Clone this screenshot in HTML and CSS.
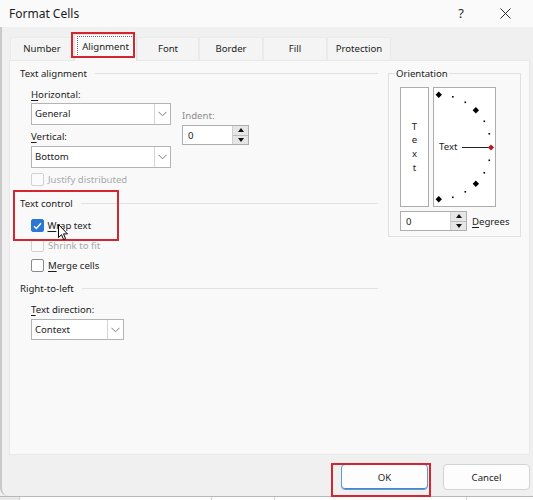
FILE: index.html
```html
<!DOCTYPE html>
<html>
<head>
<meta charset="utf-8">
<link rel="stylesheet" href="styles.css">
</head>
<body>
<div class="window">
  <header class="titlebar">
    <span class="title">Format Cells</span>
    <span class="help">?</span>
    <svg class="close" width="11" height="11" viewBox="0 0 11 11"><path d="M0.5 0.5L10.5 10.5M10.5 0.5L0.5 10.5" stroke="#2b2b2b" stroke-width="1"/></svg>
  </header>
  <div class="frame">
    <nav class="tabs">
      <div class="tab">Number</div>
      <div class="tab selected"><span class="focus">Alignment</span></div>
      <div class="tab">Font</div>
      <div class="tab">Border</div>
      <div class="tab">Fill</div>
      <div class="tab">Protection</div>
    </nav>
    <main class="panel">
      <section class="left">
        <div class="group-head"><span>Text alignment</span><i></i></div>
        <div class="align-grid">
          <div class="col">
            <div class="lbl first"><u>H</u>orizontal:</div>
            <div class="select wide"><span class="sel-val">General</span><b class="dd"><svg width="9" height="6" viewBox="0 0 9 6"><path d="M0.5 0.8L4.5 4.8L8.5 0.8" fill="none" stroke="#7a7a7a" stroke-width="1"/></svg></b></div>
            <div class="lbl vert"><u>V</u>ertical:</div>
            <div class="select wide second"><span class="sel-val">Bottom</span><b class="dd"><svg width="9" height="6" viewBox="0 0 9 6"><path d="M0.5 0.8L4.5 4.8L8.5 0.8" fill="none" stroke="#7a7a7a" stroke-width="1"/></svg></b></div>
          </div>
          <div class="col indent">
            <div class="lbl dim">Indent:</div>
            <div class="spin"><span class="spin-val">0</span><span class="arrows"><b class="up"></b><b class="down"></b></span></div>
          </div>
        </div>
        <div class="check-row disabled justify"><span class="box"></span><span>Justify distributed</span></div>

        <div class="group-head tc"><span>Text control</span><i></i></div>
        <div class="check-row wrap"><span class="box checked"><svg width="9" height="8" viewBox="0 0 9 8"><path d="M1 4.2L3.4 6.5L8 1.2" fill="none" stroke="#fff" stroke-width="1.3"/></svg></span><span><u>W</u>rap text</span></div>
        <div class="check-row disabled next"><span class="box"></span><span>Shrink to fit</span></div>
        <div class="check-row next"><span class="box"></span><span><u>M</u>erge cells</span></div>

        <div class="group-head rtl"><span>Right-to-left</span><i></i></div>
        <div class="lbl dir"><u>T</u>ext direction:</div>
        <div class="select narrow"><span class="sel-val">Context</span><b class="dd"><svg width="9" height="6" viewBox="0 0 9 6"><path d="M0.5 0.8L4.5 4.8L8.5 0.8" fill="none" stroke="#7a7a7a" stroke-width="1"/></svg></b></div>
      </section>

      <fieldset class="orientation">
        <legend>Orientation</legend>
        <div class="orient-row">
          <div class="vtext"><span>T</span><span>e</span><span>x</span><span>t</span></div>
          <div class="dial">
            <svg class="dial-svg" width="63" height="120" viewBox="0 0 63 120">
              <g fill="#000">
                <rect x="3.5" y="5.5" width="4.5" height="4.5" transform="rotate(45 5.75 7.75)"/>
                <rect x="40.6" y="21" width="4.5" height="4.5" transform="rotate(45 42.85 23.25)"/>
                <rect x="40.6" y="94.5" width="4.5" height="4.5" transform="rotate(45 42.85 96.75)"/>
                <rect x="3.5" y="110" width="4.5" height="4.5" transform="rotate(45 5.75 112.25)"/>
                <rect x="19" y="9" width="1.6" height="1.6"/>
                <rect x="31.5" y="14.5" width="1.6" height="1.6"/>
                <rect x="50.5" y="33.5" width="1.6" height="1.6"/>
                <rect x="55.5" y="46" width="1.6" height="1.6"/>
                <rect x="55.5" y="72.5" width="1.6" height="1.6"/>
                <rect x="50.5" y="85" width="1.6" height="1.6"/>
                <rect x="31.5" y="104" width="1.6" height="1.6"/>
                <rect x="19" y="109.5" width="1.6" height="1.6"/>
              </g>
              <path d="M29 60.5H57" stroke="#222" stroke-width="1"/>
              <rect x="55.8" y="58.3" width="4.4" height="4.4" fill="#b02020" transform="rotate(45 58 60.5)"/>
            </svg>
            <span class="dial-text">Text</span>
          </div>
        </div>
        <div class="deg-row">
          <div class="spin"><span class="spin-val">0</span><span class="arrows"><b class="up"></b><b class="down"></b></span></div>
          <span class="deg-lbl"><u>D</u>egrees</span>
        </div>
      </fieldset>
    </main>
    <footer class="buttons">
      <button class="btn ok">OK</button>
      <button class="btn">Cancel</button>
    </footer>
  </div>
  <div class="sheet-strip"><span class="cell first-cell"></span><span class="cell"></span><span class="cell"></span><span class="cell"></span></div>

  <div class="mark mark-tab"></div>
  <div class="mark mark-text"></div>
  <div class="mark mark-ok"></div>
  <svg class="cursor" width="11" height="17" viewBox="0 0 11 17"><path d="M0.5 0.5V13.5L3.5 10.7L5.6 15.6L7.6 14.7L5.5 9.9H9.5Z" fill="#fff" stroke="#000" stroke-width="1" stroke-linejoin="round"/></svg>
</div>
</body>
</html>
```

FILE: styles.css
```css
* { box-sizing: border-box; }
html, body { margin: 0; padding: 0; }
body {
  font-family: "Noto Sans", "Open Sans", sans-serif;
  font-size: 9.6px;
  color: #1c1c1c;
  background: #f0f0f0;
}
u { text-decoration-thickness: 1px; text-underline-offset: 1.5px; }

.window {
  position: relative;
  width: 533px;
  height: 500px;
  overflow: hidden;
  background: #f0f0f0;
}

.titlebar {
  height: 27px;
  display: flex;
  align-items: center;
  padding-left: 9px;
  background: #fafafa;
}
.title { flex: 1; font-size: 12px; color: #1a1a1a; }
.help { font-size: 13px; color: #2b2b2b; margin-right: 36px; line-height: 1; }
.close { margin-right: 22px; }

.frame {
  height: 469px;
  border-left: 2px solid #c9c9c9;
  border-bottom-left-radius: 8px;
  display: flex;
  flex-direction: column;
}

.tabs {
  height: 33px;
  display: flex;
  align-items: flex-end;
  padding-left: 8px;
}
.tab {
  width: 64px;
  height: 23px;
  display: flex;
  align-items: center;
  justify-content: center;
  padding-bottom: 2px;
  background: #f4f4f4;
  border: 1px solid #eaeaea;
  border-bottom: none;
}
.tab.selected {
  width: 63px;
  height: 27px;
  margin-bottom: -1px;
  background: #f9f9f9;
  border-color: #e4e4e4;
  position: relative;
  z-index: 1;
  padding: 1px 2px 4px;
}
.tab:nth-child(3) { width: 62px; }
.focus {
  display: flex;
  align-items: center;
  justify-content: center;
  width: 100%;
  height: 100%;
  border: 1px dotted #6a6a6a;
}

.panel {
  margin-left: 7px;
  width: 521px;
  height: 395px;
  background: #f9f9f9;
  border: 1px solid #e8e8e8;
  display: flex;
  padding: 6px 8px 0 10px;
}

.left { width: 358px; }
.group-head {
  height: 13px;
  display: flex;
  align-items: center;
  gap: 8px;
  line-height: 13px;
}
.group-head i { flex: 1; height: 1px; background: #e2e2e2; }
.group-head.tc { margin-top: 11px; }
.group-head.rtl { margin-top: 10px; }

.align-grid {
  display: flex;
  gap: 11px;
  padding-left: 11px;
}
.col { display: flex; flex-direction: column; }
.lbl { height: 13px; line-height: 13px; }
.lbl.first { margin-top: 7.5px; }
.lbl.vert { margin-top: 5.5px; }
.lbl.dim { color: #8c8c8c; }
.indent { padding-top: 29px; }
.indent .spin { margin-top: 3px; }

.select {
  display: flex;
  height: 22px;
  margin-top: 2px;
  background: #fff;
  border: 1px solid #b4b4b4;
}
.select.wide { width: 140px; }
.select.second { margin-top: 3px; height: 21.5px; }
.select.narrow { width: 93px; margin-top: 3px; height: 21px; margin-left: 11px; }
.sel-val { flex: 1; padding-left: 3px; display: flex; align-items: center; }
.dd {
  width: 16px;
  border-left: 1px solid #d4d4d4;
  display: flex;
  align-items: center;
  justify-content: center;
}

.check-row {
  display: flex;
  align-items: center;
  gap: 4px;
  height: 13px;
  padding-left: 11px;
}
.check-row.justify { margin-top: 5px; }
.check-row.wrap { margin-top: 9.5px; gap: 3.5px; }
.check-row.next { margin-top: 7px; }
.check-row.disabled { color: #a9a9a9; }
.box {
  width: 13px;
  height: 13px;
  border: 1px solid #8a8a8a;
  border-radius: 2px;
  background: #fff;
  display: flex;
  align-items: center;
  justify-content: center;
}
.check-row.disabled .box { border-color: #d2d2d2; background: #fbfbfb; }
.box.checked { background: #2a78d3; border-color: #2a78d3; }

.lbl.dir { margin-top: 8px; padding-left: 11px; }

.spin {
  display: flex;
  width: 67px;
  height: 20px;
  background: #fff;
  border: 1px solid #aeaeae;
}
.spin-val { flex: 1; padding-left: 5px; display: flex; align-items: center; }
.arrows {
  width: 16px;
  display: flex;
  flex-direction: column;
  background: #e6e6e6;
  border-left: 1px solid #cfcfcf;
}
.arrows b { flex: 1; display: flex; align-items: center; justify-content: center; }
.arrows .up { border-bottom: 1px solid #bdbdbd; }
.arrows .up::after {
  content: "";
  border-left: 3.5px solid transparent;
  border-right: 3.5px solid transparent;
  border-bottom: 4px solid #111;
}
.arrows .down::after {
  content: "";
  border-left: 3.5px solid transparent;
  border-right: 3.5px solid transparent;
  border-top: 4px solid #111;
}

.orientation {
  margin: 0 0 0 10px;
  width: 133px;
  height: 170px;
  border: 1px solid #e0e0e0;
  padding: 0 0 0 11px;
  min-width: 0;
}
.orientation legend {
  padding: 0 1px;
  margin-left: -5px;
  line-height: 13px;
  height: 13px;
}
.orient-row { display: flex; gap: 4px; margin-top: 7px; }
.vtext {
  width: 29px;
  height: 120px;
  background: #fff;
  border: 1px solid #adadad;
  display: flex;
  flex-direction: column;
  align-items: center;
  justify-content: center;
  line-height: 13.7px;
}
.dial {
  position: relative;
  width: 63px;
  height: 120px;
  background: #fff;
  border: 1px solid #adadad;
}
.dial-svg { position: absolute; left: -1px; top: -1px; }
.dial-text {
  position: absolute;
  left: 5px;
  top: 52px;
  line-height: 14px;
}
.deg-row { display: flex; align-items: center; gap: 5px; margin-top: 4px; }

.buttons {
  height: 41px;
  display: flex;
  justify-content: flex-end;
  align-items: flex-start;
  gap: 15px;
  padding: 9px 3px 0 0;
}
.btn {
  width: 87px;
  height: 26px;
  border: 1px solid #d3d3d3;
  border-radius: 4px;
  background: #fdfdfd;
  font-family: "Noto Sans", "Open Sans", sans-serif;
  font-size: 9.6px;
  color: #1c1c1c;
  padding: 0;
}
.btn.ok { border-color: #5d9ad8; box-shadow: inset 0 -1px 0 #4a86c5; }

.sheet-strip {
  height: 4px;
  display: flex;
  background: #fdfdfd;
  border-top: 1px solid #b8b8b8;
}
.cell { border-right: 1px solid #cfcfcf; width: 192px; }
.first-cell { width: 20px; background: #e8e8e8; }
.cell:nth-child(3) { width: 63px; }

.mark {
  position: absolute;
  border: 2px solid #d3262f;
  pointer-events: none;
}
.mark-tab { left: 71px; top: 32px; width: 64px; height: 26px; z-index: 2; }
.mark-text { left: 13px; top: 190px; width: 106px; height: 51px; }
.mark-ok { left: 331px; top: 463px; width: 100px; height: 34px; }
.cursor { position: absolute; left: 58px; top: 224px; }
```
